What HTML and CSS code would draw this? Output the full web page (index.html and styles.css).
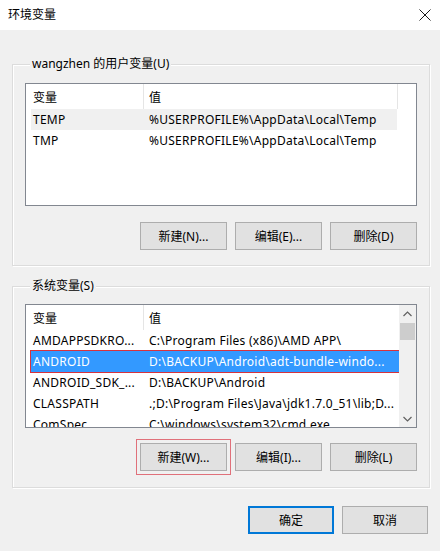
FILE: index.html
```html
<!DOCTYPE html>
<html lang="zh-CN">
<head>
<meta charset="utf-8">
<title>环境变量</title>
<link rel="stylesheet" href="styles.css">
</head>
<body>
<div class="window">
  <div class="titlebar">
    <span class="title">环境变量</span>
    <span class="close">
      <svg width="12" height="12" viewBox="0 0 12 12"><path d="M0.5 0.5 L11.5 11.5 M11.5 0.5 L0.5 11.5" stroke="#1a1a1a" stroke-width="1" fill="none"/></svg>
    </span>
  </div>
  <div class="content">
    <section class="group group-user">
      <div class="group-title">wangzhen 的用户变量(U)</div>
      <div class="list">
        <div class="list-main">
          <div class="list-header">
            <div class="hcol c1">变量</div>
            <div class="hcol c2">值</div>
          </div>
          <div class="row row-soft"><div class="cell c1">TEMP</div><div class="cell c2">%USERPROFILE%\AppData\Local\Temp</div></div>
          <div class="row"><div class="cell c1">TMP</div><div class="cell c2">%USERPROFILE%\AppData\Local\Temp</div></div>
        </div>
      </div>
      <div class="buttons">
        <button class="btn">新建(N)...</button>
        <button class="btn">编辑(E)...</button>
        <button class="btn">删除(D)</button>
      </div>
    </section>

    <section class="group group-system">
      <div class="group-title">系统变量(S)</div>
      <div class="list list-system">
        <div class="list-main">
          <div class="list-header">
            <div class="hcol c1">变量</div>
            <div class="hcol c2 c2-open">值</div>
          </div>
          <div class="row"><div class="cell c1">AMDAPPSDKRO...</div><div class="cell c2">C:\Program Files (x86)\AMD APP\</div></div>
          <div class="row row-selected"><div class="cell c1">ANDROID</div><div class="cell c2">D:\BACKUP\Android\adt-bundle-windo...</div></div>
          <div class="row"><div class="cell c1">ANDROID_SDK_...</div><div class="cell c2">D:\BACKUP\Android</div></div>
          <div class="row"><div class="cell c1">CLASSPATH</div><div class="cell c2">.;D:\Program Files\Java\jdk1.7.0_51\lib;D...</div></div>
          <div class="row"><div class="cell c1">ComSpec</div><div class="cell c2">C:\windows\system32\cmd.exe</div></div>
        </div>
        <div class="scrollbar">
          <div class="sb-arrow">
            <svg width="9" height="6" viewBox="0 0 9 6"><path d="M0.5 5 L4.5 1 L8.5 5" stroke="#606060" stroke-width="1.2" fill="none"/></svg>
          </div>
          <div class="sb-track"><div class="sb-thumb"></div></div>
          <div class="sb-arrow">
            <svg width="9" height="6" viewBox="0 0 9 6"><path d="M0.5 1 L4.5 5 L8.5 1" stroke="#606060" stroke-width="1.2" fill="none"/></svg>
          </div>
        </div>
      </div>
      <div class="buttons">
        <button class="btn btn-marked">新建(W)...</button>
        <button class="btn">编辑(I)...</button>
        <button class="btn">删除(L)</button>
      </div>
    </section>

    <div class="dialog-buttons">
      <button class="btn btn-default">确定</button>
      <button class="btn">取消</button>
    </div>
  </div>
</div>
</body>
</html>
```

FILE: styles.css
```css
html, body {
  margin: 0;
  padding: 0;
}
body {
  background: #f0f0f0;
  font-family: "Noto Sans", "Noto Sans CJK SC", sans-serif;
  font-size: 12px;
  color: #000;
}
.window {
  width: 440px;
  height: 551px;
  overflow: hidden;
  background: #f0f0f0;
}
.titlebar {
  height: 30px;
  background: #fff;
  display: flex;
  align-items: center;
  justify-content: space-between;
  padding: 0 9px 0 8px;
}
.title {
  font-size: 12px;
  line-height: 16px;
  color: #000;
}
.close {
  display: flex;
  width: 12px;
  height: 12px;
}
.content {
  padding: 34px 10px 0 12px;
  display: flex;
  flex-direction: column;
}
.group {
  border: 1px solid #dcdcdc;
  box-shadow: inset 1px 1px 0 #fff, 1px 1px 0 #fff;
  padding: 0 12px 15px 12px;
}
.group-system {
  margin-top: 20px;
  padding-bottom: 16px;
}
.group-title {
  width: fit-content;
  margin: -9px 0 0 5px;
  padding: 0 2px;
  background: #f0f0f0;
  line-height: 16px;
  white-space: nowrap;
}
.list {
  box-sizing: border-box;
  margin-top: 11px;
  height: 123px;
  border: 1px solid #828790;
  background: #fff;
  display: flex;
  overflow: hidden;
}
.list-system {
  margin-top: 10px;
  height: 124px;
}
.list-main {
  flex: 1;
  min-width: 0;
  overflow: hidden;
}
.list-header {
  display: flex;
  height: 25px;
  align-items: stretch;
}
.hcol {
  box-sizing: border-box;
  display: flex;
  align-items: center;
  border-right: 1px solid #e5e5e5;
  white-space: nowrap;
}
.hcol.c1 {
  width: 118px;
  padding-left: 7px;
}
.hcol.c2 {
  width: 254px;
  padding-left: 5px;
}
.hcol.c2-open {
  border-right: none;
}
.row {
  display: flex;
  height: 21px;
  margin-left: 5px;
  width: 366px;
  align-items: center;
  white-space: nowrap;
}
.cell {
  box-sizing: border-box;
  overflow: hidden;
  letter-spacing: 0.25px;
}
.cell.c1 {
  width: 112px;
  padding-left: 2px;
}
.cell.c2 {
  width: 254px;
  padding-left: 6px;
}
.row-soft {
  background: #f0f0f0;
}
.row-selected {
  background: #3399ff;
  color: #fff;
  outline: 1px solid #d8323c;
  outline-offset: 0;
  width: 368px;
}
.scrollbar {
  width: 17px;
  display: flex;
  flex-direction: column;
  background: #f0f0f0;
}
.sb-arrow {
  height: 17px;
  display: flex;
  align-items: center;
  justify-content: center;
}
.sb-track {
  flex: 1;
  padding: 1px 1px 0 1px;
}
.sb-thumb {
  height: 17px;
  background: #cdcdcd;
}
.buttons {
  margin-top: 16px;
  display: flex;
  justify-content: flex-end;
  gap: 8px;
}
.group-system .buttons {
  margin-top: 15px;
}
.btn {
  box-sizing: border-box;
  width: 87px;
  height: 28px;
  background: #e1e1e1;
  border: 1px solid #adadad;
  font-family: "Noto Sans", "Noto Sans CJK SC", sans-serif;
  font-size: 12px;
  color: #000;
  padding: 0;
  margin: 0;
}
.btn-marked {
  outline: 1px solid #e0707a;
  outline-offset: 3px;
}
.dialog-buttons {
  margin-top: 18px;
  display: flex;
  justify-content: flex-end;
  gap: 8px;
  padding-right: 2px;
}
.dialog-buttons .btn {
  width: 86px;
  height: 28px;
}
.btn-default {
  border: 2px solid #0078d7;
}
```
